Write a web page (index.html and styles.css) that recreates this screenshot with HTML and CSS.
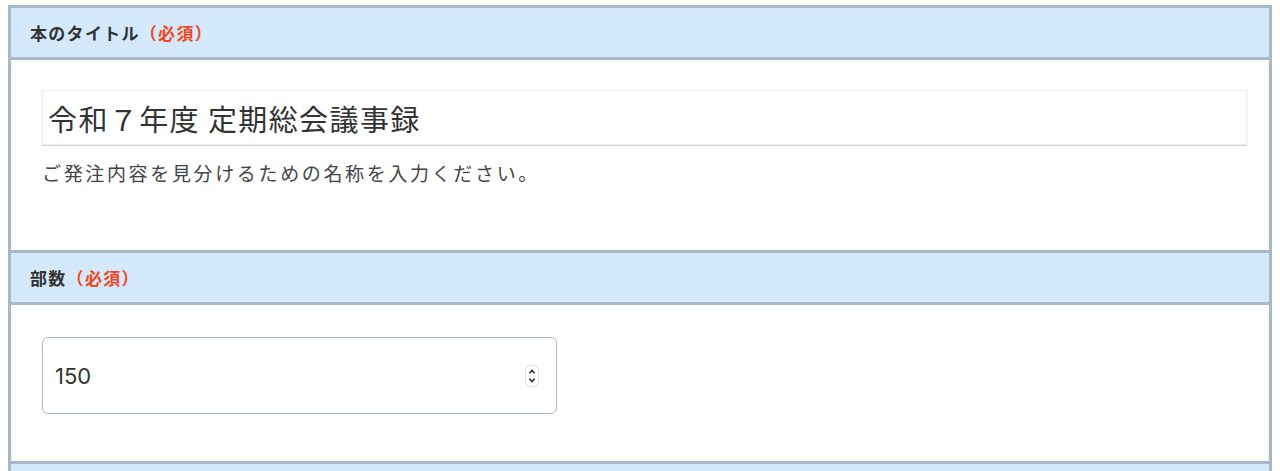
FILE: index.html
```html
<!DOCTYPE html>
<html lang="ja">
<head>
	<meta charset="UTF-8">
	<title>ご注文フォーム</title>
	<link rel="stylesheet" href="styles.css">
</head>
<body>
	<div class="form-table">
		<div class="form-row">
			<div class="row-head">本のタイトル<span class="req">（必須）</span></div>
			<div class="row-body body-title">
				<input class="title-input" type="text" value="令和７年度 定期総会議事録" />
				<p class="note">ご発注内容を見分けるための名称を入力ください。</p>
			</div>
		</div>
		<div class="form-row">
			<div class="row-head">部数<span class="req">（必須）</span></div>
			<div class="row-body body-num">
				<div class="num-box">
					<input class="num-input" type="text" value="150" />
					<!-- スピンボタン -->
					<svg class="spin" width="14" height="22" viewBox="0 0 14 22">
						<rect x="0.5" y="0.5" width="13" height="21" rx="5" fill="#fff" stroke="#e3e3e3"/>
						<line x1="1" y1="11" x2="13" y2="11" stroke="#ebebeb"/>
						<path d="M4.3 8.2 L7 5.5 L9.7 8.2" fill="none" stroke="#2b2b2b" stroke-width="1.6"/>
						<path d="M4.3 13.8 L7 16.5 L9.7 13.8" fill="none" stroke="#2b2b2b" stroke-width="1.6"/>
					</svg>
				</div>
			</div>
		</div>
		<div class="form-row">
			<div class="row-head">&nbsp;</div>
		</div>
	</div>
</body>
</html>
```

FILE: styles.css
```css
/* Reset */
body,p,div,input{ margin:0; padding:0;}
body{ margin:5px 8px 0; font-family:"Noto Sans CJK JP", "Noto Sans", sans-serif; color:#333; background:#fff;}
/* フォームテーブル */
.form-table{
	border: 3px solid #a8b8c8;
	border-bottom: none;
}
.form-row + .form-row{
	border-top: 3px solid #a8b8c8;
}
.row-head{
	height: 49px;
	line-height: 49px;
	padding-left: 19px;
	background-color: #d4eafc;
	border-bottom: 3px solid #a8b8c8;
	font-size: 17px;
	font-weight: bold;
	letter-spacing: 1.3px;
	color: #333;
}
.req{
	color: #f4461c;
}
.row-body{
	background-color: #fff;
	padding-left: 31px;
	padding-right: 22px;
}
/* タイトル */
.body-title{
	padding-top: 30px;
	height: 160px;
}
.title-input{
	display: block;
	width: 100%;
	box-sizing: border-box;
	height: 55px;
	border: 1px solid #eeeeee;
	box-shadow: 0 1px 1px rgba(0,0,0,0.18);
	padding: 0 5px;
	font-family: inherit;
	font-size: 29px;
	letter-spacing: 1.4px;
	color: #333;
	outline: none;
}
.note{
	margin-top: 14px;
	font-size: 19px;
	letter-spacing: 2.65px;
	color: #444;
}
/* 部数 */
.body-num{
	padding-top: 32px;
	height: 124px;
}
.num-box{
	display: flex;
	align-items: center;
	width: 515px;
	height: 77px;
	box-sizing: border-box;
	border: 1px solid #a8b8c8;
	border-radius: 6px;
	padding: 0 17px 0 12px;
}
.num-input{
	flex: 1;
	border: none;
	outline: none;
	font-family: "Inter", "Noto Sans", sans-serif;
	font-size: 22px;
	color: #333;
	background: transparent;
}
.spin{
	display: block;
}
```
